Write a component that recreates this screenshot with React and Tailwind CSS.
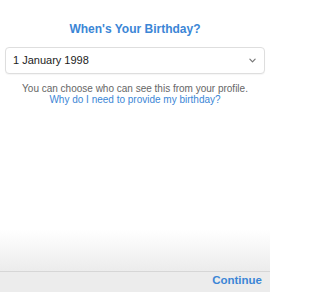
import React from 'react';

export default function App() {
  return (
    <div className="flex h-[292px] w-[270px] flex-col bg-white font-['Liberation_Sans',Arial,sans-serif]">
      <div className="flex-1 px-[5px] pt-[21px]">
        <h1 className="text-center text-[12px] font-bold leading-[16px] text-[#3b86d6]">When's Your Birthday?</h1>
        <div className="mt-[10px] flex h-[27px] items-center justify-between rounded-[4px] border border-[#dedede] bg-white pl-[7px] pr-[8px] shadow-[0_1px_1px_rgba(0,0,0,0.04)]">
          <span className="text-[11px] text-[#1c1c1c]">1 January 1998</span>
          <svg width="7" height="5" viewBox="0 0 8 5" fill="none">
            <path d="M1 1l3 3 3-3" stroke="#777" strokeWidth="1.4" strokeLinecap="round" strokeLinejoin="round" />
          </svg>
        </div>
        <p className="mt-[9px] text-center text-[10px] leading-[11px] text-[#666]">You can choose who can see this from your profile.</p>
        <p className="text-center text-[10px] leading-[11px] text-[#3b86d6]">Why do I need to provide my birthday?</p>
      </div>
      <div className="h-[41px] bg-gradient-to-b from-white to-[#ececec]" />
      <div className="flex h-[21px] items-center justify-end border-t border-[#d6d6d6] bg-[#ececec] pb-[2px] pr-[8px]">
        <span className="text-[11.5px] font-bold text-[#3b86d6]">Continue</span>
      </div>
    </div>
  );
}
